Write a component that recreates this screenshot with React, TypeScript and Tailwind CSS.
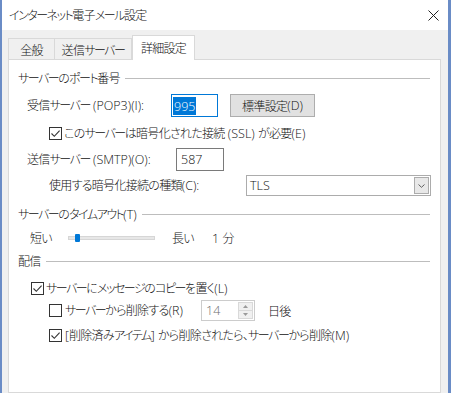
import React from "react";

function L({ children }: { children: React.ReactNode }) {
  return <span className="tracking-[0px] font-light font-['Open_Sans',sans-serif] text-[12.5px]">{children}</span>;
}
function K({ children }: { children: React.ReactNode }) {
  return <span className="tracking-[-1.5px]">{children}</span>;
}

function Check({ checked }: { checked: boolean }) {
  return (
    <span className="w-[13px] h-[13px] border border-[#333] bg-white flex items-center justify-center shrink-0">
      {checked && (
        <svg width="11" height="11" viewBox="0 0 11 11">
          <path d="M1.5 5.5 L4.3 8.3 L9.6 2.6" stroke="#333" strokeWidth="1.1" fill="none" />
        </svg>
      )}
    </span>
  );
}

function Heading({ children }: { children: React.ReactNode }) {
  return (
    <div className="h-[16px] flex items-center pl-[9px] pr-[10px]">
      <span className="whitespace-nowrap">{children}</span>
      <div className="flex-1 h-px bg-[#bdbdbd] ml-[5px]" />
    </div>
  );
}

export default function App() {
  return (
    <div className="w-[451px] h-[393px] overflow-hidden flex flex-col bg-[#f0f0f0] border-l-2 border-r-[3px] border-[#6a8cc6] text-[12px] text-[#111] font-light tracking-[-0.7px] font-['Noto_Sans_CJK_JP',sans-serif] [font-feature-settings:'palt'] leading-[16px]">
      <div className="h-[30px] shrink-0 bg-white flex items-center pl-[7px] pr-[9px]">
        <span className="flex-1"><K>インターネット</K>電子<K>メール</K>設定</span>
        <svg width="11" height="11" viewBox="0 0 11 11">
          <path d="M0.5 0.5 L10.5 10.5 M10.5 0.5 L0.5 10.5" stroke="#222" strokeWidth="1" fill="none" />
        </svg>
      </div>
      <div className="flex-1 flex flex-col pl-[6px] pr-[7px]">
        <div className="h-[29px] flex items-end shrink-0">
          <div className="w-[46px] h-[22px] border-t border-l border-[#d9d9d9] flex items-center justify-center mb-[-1px] relative">
            全般
          </div>
          <div className="w-[78px] h-[22px] border-t border-l border-r border-[#d9d9d9] flex items-center justify-center mb-[-1px] relative">
            送信<K>サーバー</K>
          </div>
          <div className="w-[63px] h-[25px] border-t border-l border-r border-[#d9d9d9] bg-white flex items-center justify-center mb-[-1px] relative z-10 pb-[1px]">
            詳細設定
          </div>
        </div>
        <div className="flex-1 bg-white border border-[#d9d9d9] flex flex-col pt-[10px]">
          <Heading><K>サーバー</K>の<K>ポート</K>番号</Heading>
          <div className="mt-[8px] h-[23px] flex items-center pl-[18px]">
            <span className="w-[144px] whitespace-nowrap">受信<K>サーバー</K><L> (POP3)(I):</L></span>
            <div className="w-[47px] h-[23px] border border-[#0078d7] flex items-center pl-[1px]">
              <span className="bg-[#0078d7] text-white px-[1px] leading-[17px]"><L>995</L></span>
            </div>
            <div className="ml-[12px] w-[85px] h-[23px] border border-[#adadad] bg-[#e1e1e1] flex items-center justify-center">
              標準設定<L>(D)</L>
            </div>
          </div>
          <div className="mt-[8px] h-[16px] flex items-center pl-[40px]">
            <Check checked />
            <span className="ml-[2px] whitespace-nowrap">この<K>サーバー</K>は暗号化された接続<L> (SSL) </L>が必要<L>(E)</L></span>
          </div>
          <div className="mt-[7px] h-[23px] flex items-center pl-[18px]">
            <span className="w-[149px] whitespace-nowrap">送信<K>サーバー</K><L> (SMTP)(O):</L></span>
            <div className="w-[48px] h-[23px] border border-[#7a7a7a] flex items-center pl-[4px]"><L>587</L></div>
          </div>
          <div className="mt-[4px] h-[21px] flex items-center pl-[40px]">
            <span className="w-[197px] whitespace-nowrap">使用する暗号化接続の種類<L>(C):</L></span>
            <div className="w-[185px] h-[21px] border border-[#acacac] flex items-center pl-[3px] pr-[1px]">
              <span className="flex-1"><L>TLS</L></span>
              <div className="w-[15px] h-[17px] border border-[#acacac] bg-[#e8e8e8] flex items-center justify-center">
                <svg width="7" height="4" viewBox="0 0 7 4">
                  <path d="M0.5 0.5 L3.5 3.3 L6.5 0.5" stroke="#606060" strokeWidth="1" fill="none" />
                </svg>
              </div>
            </div>
          </div>
          <div className="mt-[10px]">
            <Heading><K>サーバー</K>の<K>タイムアウト</K><L>(T)</L></Heading>
          </div>
          <div className="mt-[8px] h-[16px] flex items-center pl-[21px]">
            <span className="w-[38px]">短い</span>
            <div className="w-[87px] h-[10px] relative flex items-center">
              <div className="w-full h-[4px] bg-[#e7e7e7] border border-[#d6d6d6]" />
              <div className="absolute left-[7px] top-[1px] w-[5px] h-[8px] bg-[#0078d7] rounded-[1px]" />
            </div>
            <span className="ml-[17px] w-[40px]">長い</span>
            <span><L>1 </L>分</span>
          </div>
          <div className="mt-[7px]">
            <Heading>配信</Heading>
          </div>
          <div className="mt-[11px] h-[16px] flex items-center pl-[22px]">
            <Check checked />
            <span className="ml-[2px] whitespace-nowrap"><K>サーバー</K>に<K>メッセージ</K>の<K>コピー</K>を置く<L>(L)</L></span>
          </div>
          <div className="mt-[4px] h-[21px] flex items-center pl-[40px]">
            <Check checked={false} />
            <span className="ml-[3px] w-[136px] whitespace-nowrap"><K>サーバー</K>から削除する<L>(R)</L></span>
            <div className="w-[54px] h-[21px] border border-[#cccccc] flex items-center pl-[4px] pr-[1px] text-[#6d6d6d]">
              <span className="flex-1"><L>14</L></span>
              <div className="w-[15px] h-[17px] flex flex-col bg-[#f0f0f0] border border-[#d9d9d9]">
                <div className="flex-1 flex items-center justify-center border-b border-[#d9d9d9]">
                  <svg width="5" height="3" viewBox="0 0 5 3"><path d="M0 3 L2.5 0 L5 3 Z" fill="#9a9a9a" /></svg>
                </div>
                <div className="flex-1 flex items-center justify-center">
                  <svg width="5" height="3" viewBox="0 0 5 3"><path d="M0 0 L2.5 3 L5 0 Z" fill="#9a9a9a" /></svg>
                </div>
              </div>
            </div>
            <span className="ml-[13px]">日後</span>
          </div>
          <div className="mt-[6px] h-[16px] flex items-center pl-[40px]">
            <Check checked />
            <span className="ml-[3px] whitespace-nowrap"><L>[</L>削除済み<K>アイテム</K><L>] </L>から削除されたら、<K>サーバー</K>から削除<L>(M)</L></span>
          </div>
        </div>
      </div>
    </div>
  );
}
